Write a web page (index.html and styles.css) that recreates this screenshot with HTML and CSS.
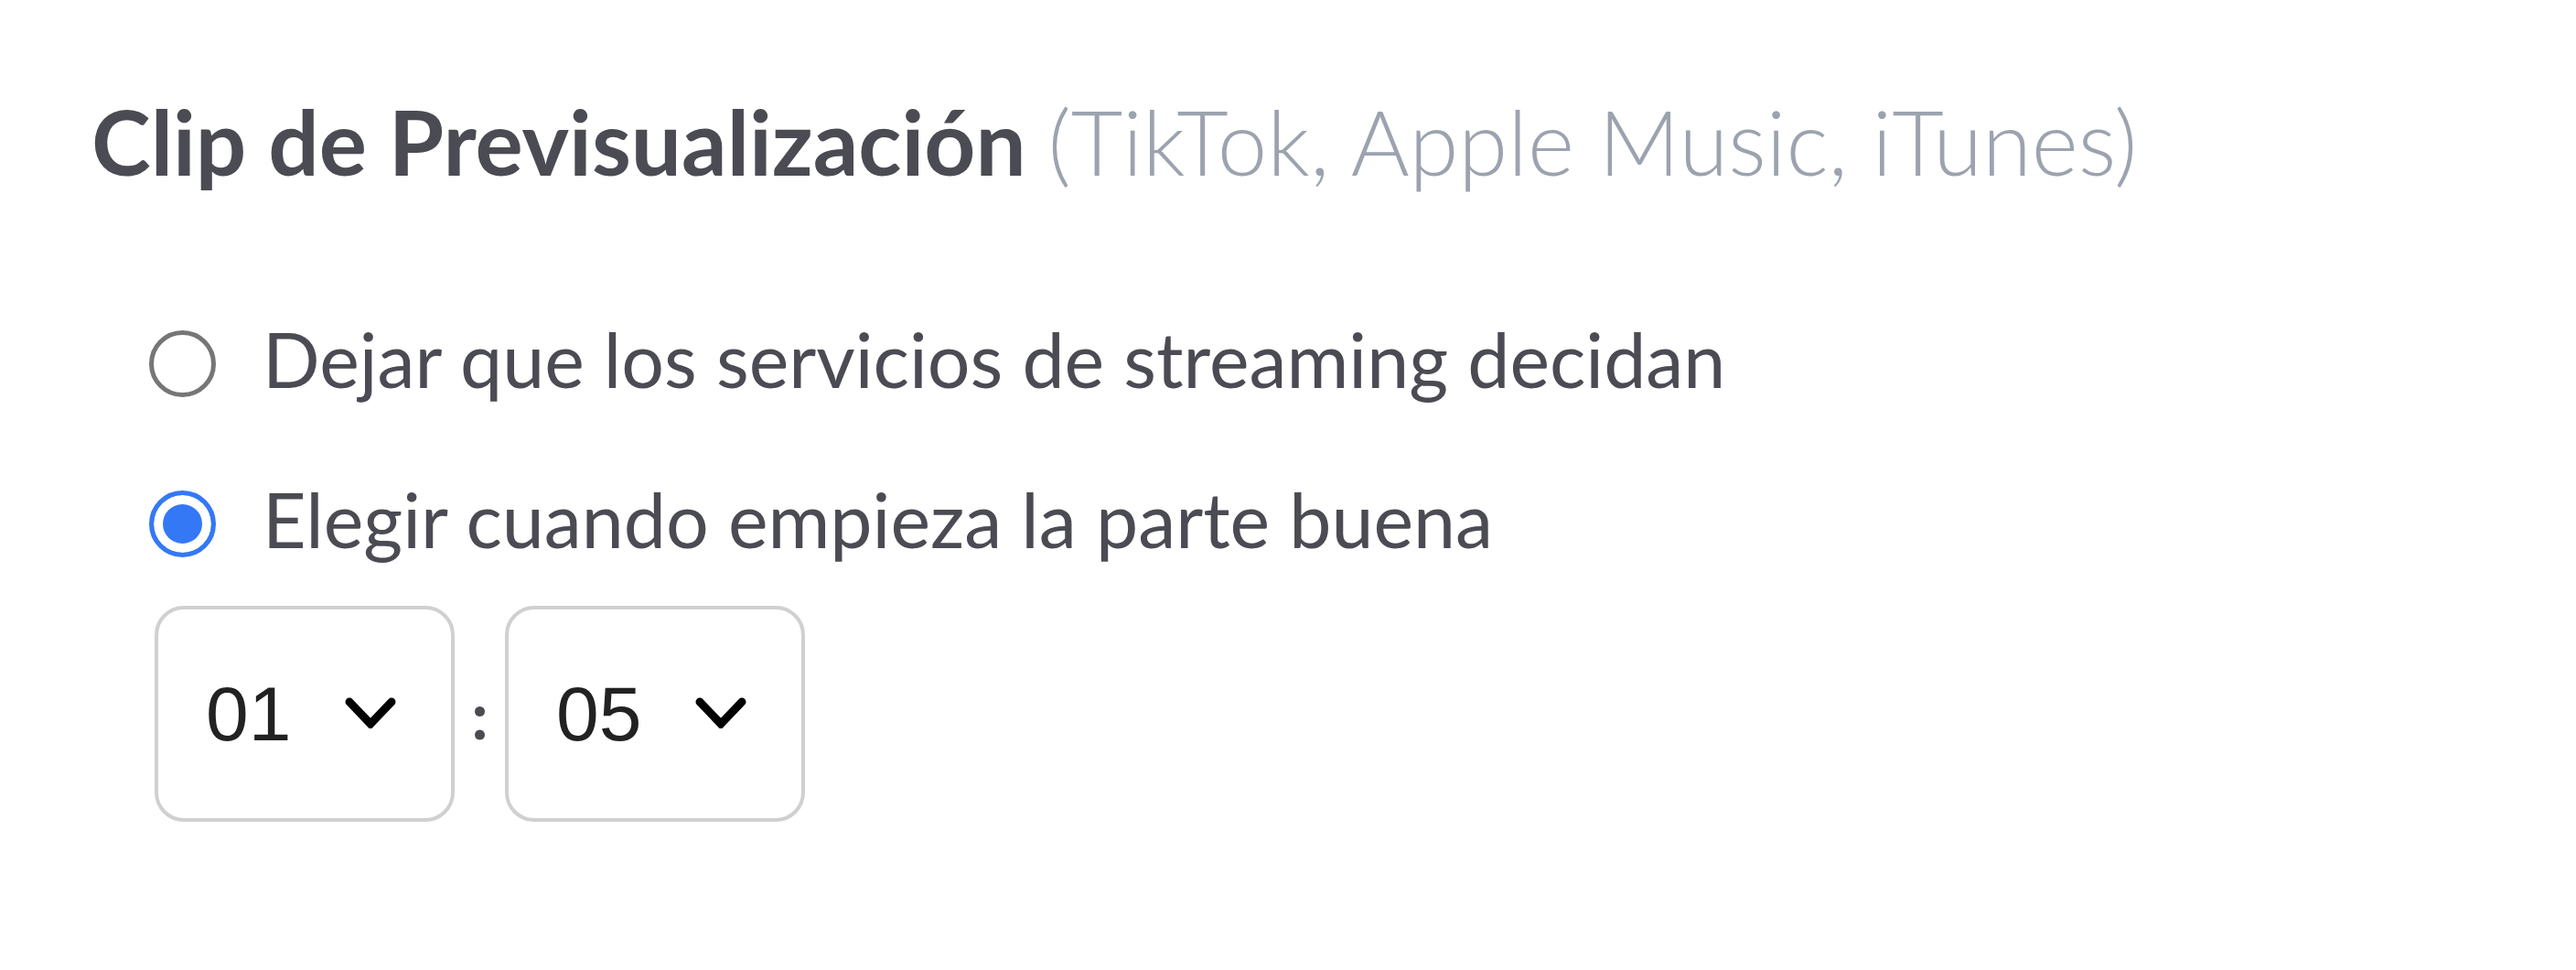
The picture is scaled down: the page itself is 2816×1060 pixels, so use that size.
FILE: index.html
```html
<!DOCTYPE html>
<html lang="es">
<head>
    <meta charset="UTF-8">
    <meta name="viewport" content="width=device-width, initial-scale=1.0">
    <title>Clip de Previsualización</title>
    <link rel="stylesheet" href="styles.css">
</head>
<body>
    <div class="section">
        <h2 class="title">Clip de Previsualización <span class="hint">(TikTok, Apple Music, iTunes)</span></h2>

        <div class="options">
            <label class="option">
                <input type="radio" name="clip" value="auto">
                <span>Dejar que los servicios de streaming decidan</span>
            </label>
            <label class="option">
                <input type="radio" name="clip" value="custom" checked>
                <span>Elegir cuando empieza la parte buena</span>
            </label>
        </div>

        <div class="time">
            <div class="time-box">
                <select id="minutes">
                    <option>00</option>
                    <option selected>01</option>
                    <option>02</option>
                    <option>03</option>
                </select>
                <svg class="chevron" viewBox="0 0 56 34"><path d="M5 5 L28 29 L51 5" fill="none" stroke="#000" stroke-width="9" stroke-linecap="round" stroke-linejoin="miter"/></svg>
            </div>
            <span class="colon">:</span>
            <div class="time-box">
                <select id="seconds">
                    <option>00</option>
                    <option selected>05</option>
                    <option>10</option>
                    <option>15</option>
                </select>
                <svg class="chevron" viewBox="0 0 56 34"><path d="M5 5 L28 29 L51 5" fill="none" stroke="#000" stroke-width="9" stroke-linecap="round" stroke-linejoin="miter"/></svg>
            </div>
        </div>
    </div>
</body>
</html>
```

FILE: styles.css
```css
body { margin: 0; background: #fff; font-family: Lato, "Noto Sans", sans-serif; color: #4b4b53; }
.section { padding: 94px 0 0 100px; }
.title { margin: 0; font-size: 97.8px; line-height: 120px; font-weight: 700; }
.hint { font-weight: 300; color: #9ca3af; }

.options { display: flex; flex-direction: column; gap: 73px; margin: 128px 0 0 63px; }
.option { display: flex; align-items: center; gap: 51px; font-size: 82.5px; line-height: 102px; }
.option input { appearance: none; margin: 8px 0 0; width: 73px; height: 73px; border: 5px solid #767676; border-radius: 50%; background: #fff; }
.option input:checked { border-color: #3478f6; background: #3478f6; box-shadow: inset 0 0 0 10px #fff; }

.time { display: flex; align-items: center; margin: 43px 0 0 69px; }
.time-box { position: relative; }
.time-box select { appearance: none; width: 328px; height: 236px; padding: 0 0 0 52px; border: 4px solid #d0d0d0; border-radius: 32px; background: #fff; font-family: "Liberation Sans", Arial, sans-serif; font-size: 84px; color: #222; }
.chevron { position: absolute; top: 100px; left: 208px; width: 56px; height: 34px; pointer-events: none; }
.colon { width: 55px; text-align: center; font-size: 72px; font-weight: 700; color: #4b4b53; }
```
